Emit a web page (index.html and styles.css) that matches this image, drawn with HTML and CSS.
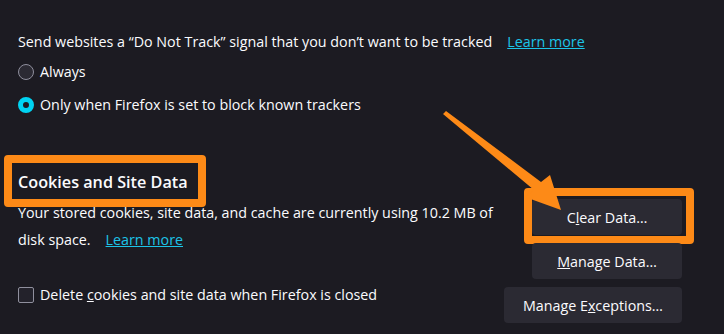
FILE: index.html
```html
<!DOCTYPE html>
<html lang="en">
<head>
<meta charset="utf-8">
<title>Privacy settings</title>
<link rel="stylesheet" href="styles.css">
</head>
<body>
<main class="page">
  <section class="dnt">
    <p class="line">Send websites a “Do Not Track” signal that you don’t want to be tracked<a class="link" href="#">Learn more</a></p>
    <label class="radio-row"><span class="radio"></span><span>Always</span></label>
    <label class="radio-row"><span class="radio checked"></span><span>Only when Firefox is set to block known trackers</span></label>
  </section>

  <section class="cookies">
    <h2 class="heading"><span class="mark">Cookies and Site Data</span></h2>
    <div class="cookies-row">
      <div class="cookies-text">
        <p class="desc"><span>Your stored cookies, site data, and cache are currently using 10.2 MB of</span><br><span>disk space.</span><a class="link" href="#">Learn more</a></p>
        <label class="check-row"><span class="checkbox"></span><span>Delete <u>c</u>ookies and site data when Firefox is closed</span></label>
      </div>
      <div class="buttons">
        <div class="pair">
          <button class="btn mark-btn">C<u>l</u>ear Data…</button>
          <button class="btn"><u>M</u>anage Data…</button>
        </div>
        <button class="btn btn-wide">Manage E<u>x</u>ceptions…</button>
      </div>
    </div>
  </section>

  <svg class="arrow" width="724" height="334" viewBox="0 0 724 334" aria-hidden="true">
    <polygon points="443,114 446,111 541,182 550,175 561,210 525,197 534,190" fill="#fd8a17"/>
  </svg>
</main>
</body>
</html>
```

FILE: styles.css
```css
html, body {
  margin: 0;
  padding: 0;
  background: #1c1b22;
}

.page {
  position: relative;
  width: 724px;
  height: 334px;
  box-sizing: border-box;
  padding: 28px 42px 0 18px;
  font-family: "Open Sans", "Noto Sans", sans-serif;
  font-size: 14.3px;
  color: #fbfbfe;
  overflow: hidden;
}

.line {
  margin: 0;
  line-height: 27px;
  white-space: nowrap;
}

.link {
  display: inline-block;
  color: #1cc4e8;
  text-decoration: underline;
  margin-left: 15px;
}

.radio-row, .check-row {
  display: flex;
  align-items: center;
  height: 33px;
  white-space: nowrap;
}

.radio {
  width: 16px;
  height: 16px;
  box-sizing: border-box;
  border-radius: 50%;
  border: 1px solid #8f8f9d;
  background: #2b2a33;
  margin-right: 6px;
  flex: none;
}

.radio.checked {
  border: 5px solid #00d3f2;
  background: #1c1b22;
}

.heading {
  margin: 48px 0 0;
  font-size: 16.2px;
  font-weight: 600;
  line-height: 26px;
}

.mark {
  position: relative;
  display: inline-block;
}

.mark::after {
  content: "";
  position: absolute;
  top: -14px;
  bottom: -12px;
  left: -14px;
  right: -18px;
  border: 8px solid #fd8a17;
  border-radius: 4px;
}

.cookies-row {
  display: flex;
  justify-content: space-between;
  align-items: flex-start;
  margin-top: 4px;
}

.desc {
  margin: 0;
  width: 480px;
  line-height: 27px;
  white-space: nowrap;
}

.check-row {
  margin-top: 25px;
}

.checkbox {
  width: 16px;
  height: 16px;
  box-sizing: border-box;
  border: 1px solid #8f8f9d;
  border-radius: 2px;
  background: #23222b;
  margin-right: 6px;
  flex: none;
}

.buttons {
  display: flex;
  flex-direction: column;
  align-items: flex-end;
  gap: 8px;
}

.pair {
  display: flex;
  flex-direction: column;
  gap: 8px;
  width: 150px;
}

.btn {
  position: relative;
  height: 36px;
  padding: 0 16px;
  border: none;
  border-radius: 4px;
  background: #2b2a33;
  color: #fbfbfe;
  font-family: inherit;
  font-size: inherit;
  white-space: nowrap;
}

.btn-wide {
  padding: 0 19px;
}

.mark-btn::after {
  content: "";
  position: absolute;
  top: -11px;
  bottom: -9px;
  left: -8px;
  right: -12px;
  border: 8px solid #fd8a17;
  border-radius: 4px;
}

.arrow {
  position: absolute;
  left: 0;
  top: 0;
  pointer-events: none;
}
```
